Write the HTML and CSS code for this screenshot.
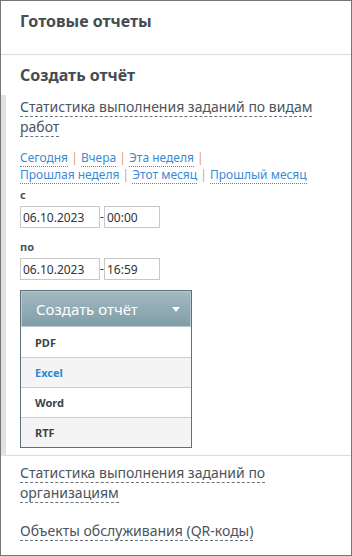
FILE: index.html
```html
<!DOCTYPE html>
<html lang="ru">
<head>
  <meta charset="UTF-8">
  <title>Отчеты</title>
  <link rel="stylesheet" href="styles.css">
</head>
<body>
  <div class="panel">
    <div class="block block-top">
      <h2>Готовые отчеты</h2>
    </div>
    <div class="block block-create">
      <h2>Создать отчёт</h2>
    </div>
    <div class="report active">
      <a class="report-name">Статистика выполнения заданий по видам работ</a>
      <div class="periods">
        <a>Сегодня</a> <span class="sep">|</span> <a>Вчера</a> <span class="sep">|</span> <a>Эта неделя</a> <span class="sep">|</span><br>
        <a>Прошлая неделя</a> <span class="sep">|</span> <a>Этот месяц</a> <span class="sep">|</span> <a>Прошлый месяц</a>
      </div>
      <label class="lbl">с</label>
      <div class="range">
        <input class="date" type="text" value="06.10.2023"><span class="dash">-</span><input class="time" type="text" value="00:00">
      </div>
      <label class="lbl lbl-to">по</label>
      <div class="range">
        <input class="date" type="text" value="06.10.2023"><span class="dash">-</span><input class="time" type="text" value="16:59">
      </div>
      <div class="dropdown">
        <div class="dropdown-head">
          <span>Создать отчёт</span>
          <svg width="8" height="5" viewBox="0 0 8 5"><path d="M0 0h8L4 5z" fill="#fff"/></svg>
        </div>
        <div class="dropdown-item">PDF</div>
        <div class="dropdown-item alt hover">Excel</div>
        <div class="dropdown-item">Word</div>
        <div class="dropdown-item alt">RTF</div>
      </div>
    </div>
    <div class="report">
      <a class="report-name">Статистика выполнения заданий по организациям</a>
    </div>
    <div class="report">
      <a class="report-name">Объекты обслуживания (QR-коды)</a>
    </div>
  </div>
</body>
</html>
```
FILE: styles.css
```css
body {
  margin: 0;
  font-family: "Noto Sans", Arial, sans-serif;
  color: #4a5560;
  background: #fff;
}
.panel {
  width: 352px;
  height: 556px;
  box-sizing: border-box;
  border: 1px solid #767676;
  overflow: hidden;
}
.block h2 {
  margin: 0;
  font-size: 16px;
  line-height: 22px;
  font-weight: bold;
  color: #454c53;
}
.block-top {
  height: 54px;
  padding: 9px 19px 0;
  box-sizing: border-box;
  border-bottom: 1px solid #dcdcdc;
}
.block-create {
  padding: 9px 19px 9px;
}
.report {
  padding: 0 19px;
  font-size: 14px;
  line-height: 20px;
}
.report.active {
  border-left: 5px solid #e2e2e2;
  padding: 2px 19px 7px 14px;
  border-bottom: 1px solid #dcdcdc;
}
.report-name {
  color: #4a5560;
  border-bottom: 1px dashed #6a747c;
}
.report + .report {
  padding-top: 7px;
}
.report:last-child {
  padding-top: 18px;
}
.periods {
  margin-top: 12px;
  font-size: 12px;
  line-height: 17px;
  color: #3a8ad6;
}
.periods a {
  color: #3a8ad6;
  border-bottom: 1px dotted #3a8ad6;
}
.sep {
  color: #e0a060;
}
.lbl {
  display: block;
  margin-top: 4px;
  font-size: 11px;
  font-weight: bold;
  color: #4a5560;
  line-height: 16px;
}
.lbl-to {
  margin-top: 11px;
}
.range {
  display: flex;
  align-items: center;
  margin-top: 3px;
}
.range input {
  height: 22px;
  box-sizing: border-box;
  border: 1px solid #c8c8c8;
  font-family: "Noto Sans", Arial, sans-serif;
  font-size: 12px;
  color: #333;
  padding: 0 2px;
  margin: 0;
}
.date {
  width: 80px;
}
.time {
  width: 56px;
}
.dash {
  width: 4px;
  font-size: 12px;
  color: #333;
}
.dropdown {
  width: 172px;
  box-sizing: border-box;
  margin-top: 10px;
  border: 1px solid #5e717a;
}
.dropdown-head {
  display: flex;
  justify-content: space-between;
  align-items: center;
  height: 36px;
  box-sizing: border-box;
  padding: 0 10px 0 14px;
  border: 1px solid #b9c9cf;
  background: linear-gradient(#a3b8bf, #7f9ea8);
  color: #fff;
  font-size: 15px;
}
.dropdown-item {
  height: 30px;
  box-sizing: border-box;
  line-height: 29px;
  padding-left: 14px;
  font-size: 11px;
  font-weight: bold;
  color: #3c444a;
  border-top: 1px solid #c6ced2;
  background: #fff;
}
.dropdown-head + .dropdown-item {
  border-top-color: #fff;
}
.dropdown-item.alt {
  background: #f4f4f4;
}
.dropdown-item.hover {
  color: #2f86d4;
}
```
